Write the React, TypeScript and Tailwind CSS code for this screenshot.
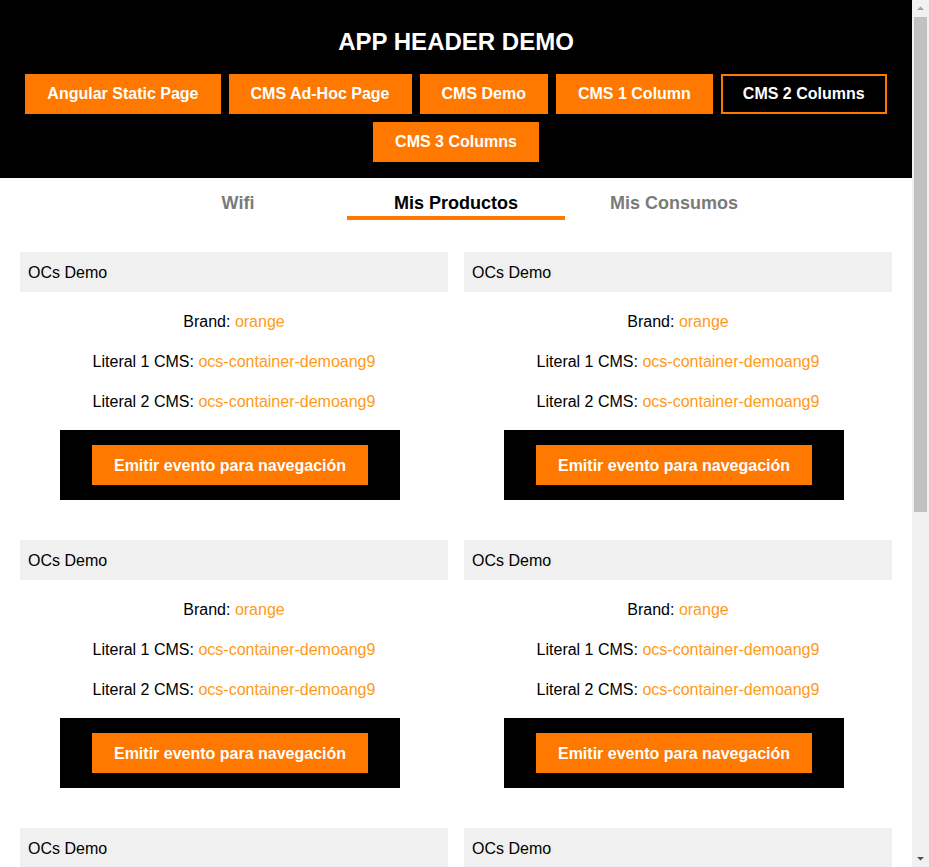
const navItems = [
  { label: "Angular Static Page", active: false },
  { label: "CMS Ad-Hoc Page", active: false },
  { label: "CMS Demo", active: false },
  { label: "CMS 1 Column", active: false },
  { label: "CMS 2 Columns", active: true },
  { label: "CMS 3 Columns", active: false },
];

const tabs = [
  { label: "Wifi", active: false },
  { label: "Mis Productos", active: true },
  { label: "Mis Consumos", active: false },
];

function OcsCard() {
  return (
    <div>
      <div className="flex h-10 items-center bg-[#f0f0f0] pl-2 pt-px text-base text-black">OCs Demo</div>
      <div className="pt-[19px] text-center text-base leading-[22px] text-black">
        <p>
          Brand: <span className="text-[#ff9a1a]">orange</span>
        </p>
        <p className="mt-[18px]">
          Literal 1 CMS: <span className="text-[#ff9a1a]">ocs-container-demoang9</span>
        </p>
        <p className="mt-[18px]">
          Literal 2 CMS: <span className="text-[#ff9a1a]">ocs-container-demoang9</span>
        </p>
      </div>
      <div className="ml-10 mt-[17px] flex w-[340px] justify-center bg-black py-[15px]">
        <button className="h-10 w-[276px] bg-[#ff7900] pt-px text-base font-bold text-white">
          Emitir evento para navegación
        </button>
      </div>
    </div>
  );
}

// fake classic scrollbar, as in the screenshot
function Scrollbar() {
  return (
    <div className="fixed right-0 top-0 flex h-screen w-[17px] flex-col items-center bg-[#f1f1f1]">
      <svg width="17" height="17" viewBox="0 0 17 17" className="shrink-0">
        <path d="M5 10 L8.5 6.5 L12 10 Z" fill="#a3a3a3" />
      </svg>
      <div className="h-[495px] w-[13px] bg-[#c1c1c1]" />
      <div className="flex-1" />
      <svg width="17" height="17" viewBox="0 0 17 17" className="shrink-0">
        <path d="M5 7 L8.5 10.5 L12 7 Z" fill="#505050" />
      </svg>
    </div>
  );
}

export default function App() {
  return (
    <div className="min-h-[1200px] w-[912px] bg-white font-['Liberation_Sans',Arial,sans-serif]">
      <header className="bg-black pb-4 pt-[27px]">
        <h1 className="text-center text-2xl font-bold leading-[30px] text-white">APP HEADER DEMO</h1>
        <nav className="mt-[17px] flex flex-wrap justify-center gap-2 px-5">
          {navItems.map((item) => (
            <button
              key={item.label}
              className={
                item.active
                  ? "h-10 border-2 border-[#ff7900] bg-black px-5 text-base font-bold text-white"
                  : "h-10 border-2 border-[#ff7900] bg-[#ff7900] px-5 text-base font-bold text-white"
              }
            >
              {item.label}
            </button>
          ))}
        </nav>
      </header>
      <div className="flex justify-center">
        {tabs.map((tab) => (
          <div
            key={tab.label}
            className={
              tab.active
                ? "flex h-[42px] w-[218px] justify-center border-b-4 border-[#ff7900] pt-[11px] text-lg font-bold leading-7 text-black"
                : "flex h-[42px] w-[218px] justify-center border-b-4 border-transparent pt-[11px] text-lg font-bold leading-7 text-[#7a7a7a]"
            }
          >
            {tab.label}
          </div>
        ))}
      </div>
      <main className="grid grid-cols-2 gap-x-4 gap-y-10 px-5 pt-8">
        {Array.from({ length: 6 }).map((_, i) => (
          <OcsCard key={i} />
        ))}
      </main>
      <Scrollbar />
    </div>
  );
}
